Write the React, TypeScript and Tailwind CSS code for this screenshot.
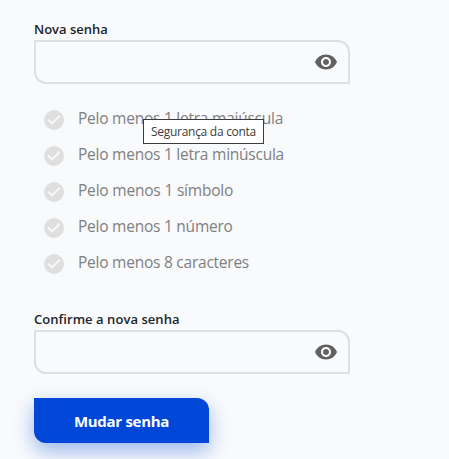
const font = "font-['Open_Sans','Noto_Sans',sans-serif]";

function EyeIcon() {
  return (
    <svg viewBox="0 0 24 24" className="h-6 w-6 shrink-0 fill-[#616161]" aria-hidden="true">
      <path d="M12 4.5C7 4.5 2.73 7.61 1 12c1.73 4.39 6 7.5 11 7.5s9.27-3.11 11-7.5c-1.73-4.39-6-7.5-11-7.5zM12 17c-2.76 0-5-2.24-5-5s2.24-5 5-5 5 2.24 5 5-2.24 5-5 5zm0-8c-1.66 0-3 1.34-3 3s1.34 3 3 3 3-1.34 3-3-1.34-3-3-3z" />
    </svg>
  );
}

function CheckIcon() {
  return (
    <svg viewBox="0 0 20 20" className="h-5 w-5 shrink-0" aria-hidden="true">
      <circle cx="10" cy="10" r="10" fill="#dfdfdf" />
      <path d="M4.2 9.7l3.8 3.7 7.8-7.7" fill="none" stroke="#f8f9fc" strokeWidth="2" />
    </svg>
  );
}

function PasswordField({ label, labelClass }: { label: string; labelClass: string }) {
  return (
    <label className="block w-[316px]">
      <span className={`block h-5 whitespace-nowrap text-[13px] leading-5 font-semibold text-[#212529] ${labelClass}`}>{label}</span>
      <span className="mt-px flex h-11 items-center justify-end rounded-tr-[12px] rounded-bl-[12px] border-2 border-[#dddfe1] pr-2.5">
        <EyeIcon />
      </span>
    </label>
  );
}

const rules = [
  { text: "Pelo menos 1 letra maiúscula", spacing: "tracking-[-0.24px]" },
  { text: "Pelo menos 1 letra minúscula", spacing: "tracking-[-0.24px]" },
  { text: "Pelo menos 1 símbolo", spacing: "tracking-[-0.2px]" },
  { text: "Pelo menos 1 número", spacing: "tracking-[-0.24px]" },
  { text: "Pelo menos 8 caracteres", spacing: "tracking-[-0.24px]" },
];

export default function App() {
  return (
    <main className={`relative h-[459px] w-full overflow-hidden bg-[#f8fafc] pt-[19px] pl-[34px] ${font}`}>
      <PasswordField label="Nova senha" labelClass="tracking-[0px]" />
      <ul className="mt-[18px] flex flex-col pl-2.5">
        {rules.map((rule) => (
          <li key={rule.text} className="flex h-[36.1px] items-center gap-3.5">
            <CheckIcon />
            <span className={`-mt-[4.2px] whitespace-nowrap text-[15.5px] leading-6 text-[#808080] ${rule.spacing}`}>{rule.text}</span>
          </li>
        ))}
      </ul>
      <div className="mt-[26.5px]">
        <PasswordField label="Confirme a nova senha" labelClass="tracking-[0.05px]" />
      </div>
      <button className="mt-6 block h-[45px] w-[175px] rounded-tr-[12px] rounded-bl-[12px] bg-[#0047d7] pt-0.5 text-[15px] font-bold tracking-[-0.3px] text-white shadow-[0_8px_20px_rgba(0,71,215,0.38)]">
        Mudar senha
      </button>
      <div role="tooltip" className="absolute top-[119px] left-[143px] flex h-[25px] w-[121px] items-center justify-center whitespace-nowrap border border-[#3c3c3c] bg-white text-[12px] tracking-[-0.28px] text-[#3c3c3c]">
        Segurança da conta
      </div>
    </main>
  );
}
